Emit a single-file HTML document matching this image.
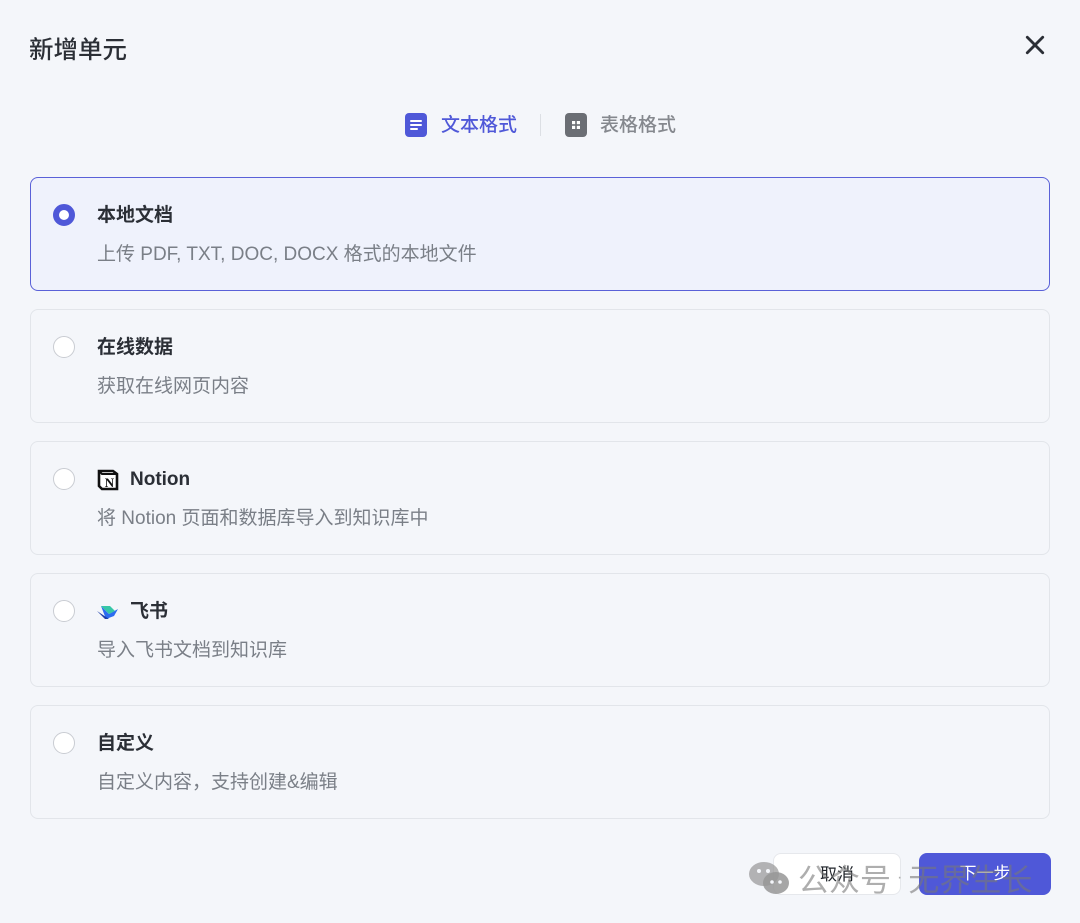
<!DOCTYPE html>
<html><head><meta charset="utf-8"><style>
*{box-sizing:border-box;margin:0;padding:0}
body{width:1080px;height:923px;background:#f4f6fa;font-family:"Liberation Sans","Noto Sans CJK SC",sans-serif;position:relative;overflow:hidden;color:#1f2329}
.title{position:absolute;left:29px;top:31px;font-size:24.5px;font-weight:500;color:#2b2f36}
.close{position:absolute;left:1024px;top:34px}
.tabs{position:absolute;top:113px;left:0;width:1080px;height:26px}
.tab{position:absolute;top:0;font-size:19px;line-height:26px;font-weight:500}
.sep{position:absolute;left:540px;top:114px;width:1px;height:22px;background:#dcdfe4}
.card{position:absolute;left:30px;width:1020px;height:114px;border:1px solid #e2e5ea;border-radius:8px;background:#f4f6fa}
.card.sel{border:1.5px solid #5a61d8;background:#eff2fc}
.radio{position:absolute;left:22px;top:26px;width:22px;height:22px;border-radius:50%;border:1.5px solid #c9ccd2;background:#fff}
.sel .radio{border:6px solid #4f58d8;background:#fff}
.h{position:absolute;left:66px;top:25px;font-size:19px;font-weight:700;color:#2b2f36;line-height:26px;display:flex;align-items:center}
.d{position:absolute;left:66px;top:64px;font-size:19px;color:#7a7f87;line-height:26px}
.btn{position:absolute;top:853px;height:42px;border-radius:8px;font-size:17px;line-height:42px;text-align:center}
.wm{position:absolute;top:855px;left:748px;font-size:31px;color:rgba(120,120,120,.6);display:flex;align-items:center;gap:6px}
</style></head><body>
<div class="title">新增单元</div>
<svg class="close" width="22" height="22" viewBox="0 0 20 20"><path d="M3 3L17 17M17 3L3 17" stroke="#2b2f36" stroke-width="2.6" stroke-linecap="round"/></svg>
<div class="tabs">
<svg style="position:absolute;left:405px;top:0" width="22" height="24" viewBox="0 0 22 24"><rect x="0" y="0" width="22" height="24" rx="4" fill="#4f58d8"/><path d="M6 8h10M6 12h10M6 16h6" stroke="#fff" stroke-width="2" stroke-linecap="round"/></svg>
<div class="tab" style="left:441px;color:#4f58d8">文本格式</div>
<svg style="position:absolute;left:565px;top:0" width="22" height="24" viewBox="0 0 22 24"><rect x="0" y="0" width="22" height="24" rx="4" fill="#6b6e74"/><rect x="7" y="8" width="3.2" height="3.2" fill="#fff"/><rect x="11.8" y="8" width="3.2" height="3.2" fill="#fff"/><rect x="7" y="12.8" width="3.2" height="3.2" fill="#fff"/><rect x="11.8" y="12.8" width="3.2" height="3.2" fill="#fff"/></svg>
<div class="tab" style="left:600px;color:#85888e">表格格式</div>
</div>
<div class="sep"></div>

<div class="card sel" style="top:177px"><div class="radio"></div><div class="h">本地文档</div><div class="d">上传 PDF, TXT, DOC, DOCX 格式的本地文件</div></div>
<div class="card" style="top:309px"><div class="radio"></div><div class="h">在线数据</div><div class="d">获取在线网页内容</div></div>
<div class="card" style="top:441px"><div class="radio"></div><div class="h"><svg width="22" height="22" viewBox="0 0 22 22" style="margin-right:11px"><path d="M2 2h14l4 3v15H5l-3-3z" fill="#fff" stroke="#111" stroke-width="2.6"/><path d="M2 2l3 3h15" fill="none" stroke="#111" stroke-width="2"/><text x="12.5" y="18" font-family="Liberation Serif" font-weight="700" font-size="13" text-anchor="middle" fill="#111">N</text></svg>Notion</div><div class="d">将 Notion 页面和数据库导入到知识库中</div></div>
<div class="card" style="top:573px"><div class="radio"></div><div class="h"><svg width="22" height="18" viewBox="0 0 22 18" style="margin-right:11px"><path d="M4 3l8 8 9-5-4 7-8 3z" fill="#2d6cf0"/><path d="M4 3h9l5 5-6 3z" fill="#36c7a7"/><path d="M0 8l8 8h4z" fill="#1b3ca8"/></svg>飞书</div><div class="d">导入飞书文档到知识库</div></div>
<div class="card" style="top:705px"><div class="radio"></div><div class="h">自定义</div><div class="d">自定义内容，支持创建&amp;编辑</div></div>

<div class="btn" style="left:773px;width:128px;background:#fff;border:1px solid #e6e8ec;color:#1f2329">取消</div>
<div class="btn" style="left:919px;width:132px;background:#4f58d8;color:#fff">下一步</div>
<div class="wm"><svg width="44" height="36" viewBox="0 0 44 36"><ellipse cx="16" cy="14" rx="15" ry="12" fill="rgba(150,150,150,.7)"/><ellipse cx="28" cy="23" rx="13" ry="11" fill="rgba(150,150,150,.85)"/><circle cx="11" cy="11" r="2" fill="#f4f6fa"/><circle cx="20" cy="11" r="2" fill="#f4f6fa"/><circle cx="24" cy="22" r="1.8" fill="#f4f6fa"/><circle cx="32" cy="22" r="1.8" fill="#f4f6fa"/></svg><span>公众号</span><span style="font-size:16px">·</span><span>无界生长</span></div>
</body></html>
